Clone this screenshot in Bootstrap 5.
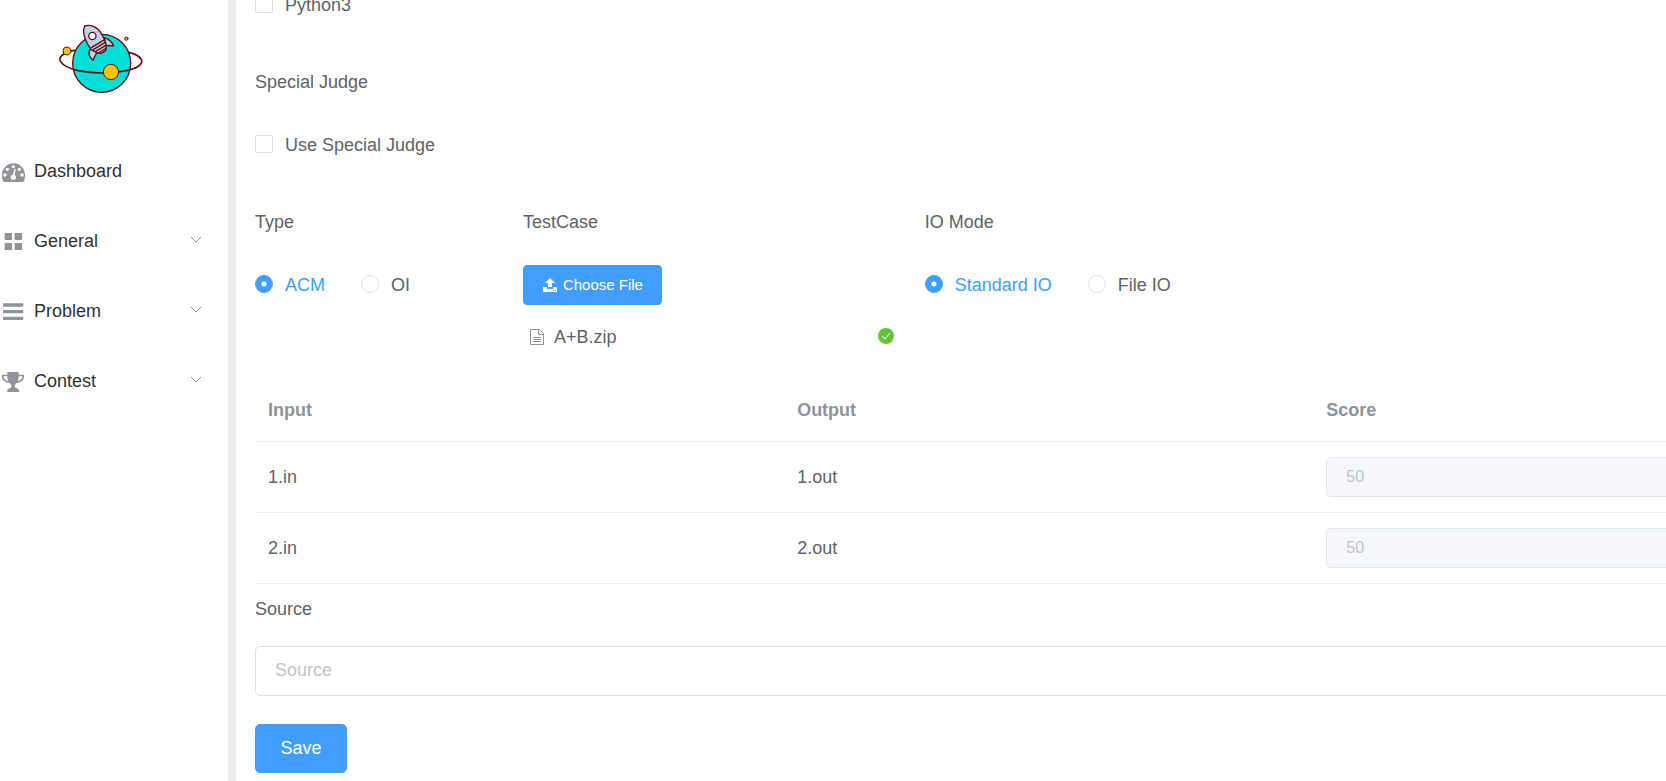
<!DOCTYPE html>
<html lang="en">
<head>
<meta charset="utf-8">
<meta name="viewport" content="width=device-width, initial-scale=1">
<title>Edit Problem</title>
<link href="https://cdn.jsdelivr.net/npm/bootstrap@5.3.0/dist/css/bootstrap.min.css" rel="stylesheet">
<style>
  :root { --accent: #409eff; --line: #ebeef5; --edge: #dcdfe6; --muted: #909399; --faint: #c0c4cc; }
  body { font-family: "Liberation Sans", Arial, sans-serif; font-size: 18px; line-height: 24px; color: #606266; overflow-x: hidden; }
  .side { width: 236px; border-right: 8px solid #ebebeb; }
  .brand { height: 136px; padding: 10px 0 0 40px; }
  .menu-row { height: 70px; color: #303133; padding: 0 26px 0 0; gap: 8px; font-size: 18px; }
  .menu-row svg { fill: var(--muted); flex: none; }
  .menu-row .chev { fill: none; stroke: var(--muted); margin-left: auto; }
  .pane { padding-left: 19px; overflow: hidden; }
  /* the form is wider than the window and runs past its right edge */
  .sheet { width: 112.5%; margin-top: -21px; }
  .field-title { display: block; line-height: 50px; margin: 0 0 12px; font-size: 18px; }
  .field-line { height: 50px; gap: 36px; }
  .block-gap { margin-bottom: 28px; }
  .pick { gap: 12px; }
  .pick label { padding-top: 2px; }
  .form-check-input.tick { width: 18px; height: 18px; margin: 0; border: 1px solid var(--edge); border-radius: 2px; flex: none; }
  .form-check-input.tick[type=radio] { border-radius: 50%; }
  .form-check-input.tick:checked { background: radial-gradient(circle, #fff 0 2px, var(--accent) 3px); border-color: var(--accent); }
  .form-check-input.tick:checked + label { color: var(--accent); }
  .row { --bs-gutter-x: 20px; }
  .btn-accent { --bs-btn-color: #fff; --bs-btn-bg: #409eff; --bs-btn-border-color: #409eff; --bs-btn-hover-color: #fff; --bs-btn-hover-bg: #66b1ff; --bs-btn-hover-border-color: #66b1ff; border-radius: 4px; }
  .upload-area { padding: 6px 0 26px; }
  .btn-upload { height: 40px; padding: 0 18px; font-size: 15px; gap: 5px; margin-bottom: 16px; }
  .btn-save { height: 49px; width: 92px; font-size: 18px; border-radius: 5px; }
  .file-row { height: 32px; padding: 0 11px 0 6px; }
  .file-row a { color: #606266; gap: 9px; }
  .cases { table-layout: fixed; margin: 0; --bs-table-bg: transparent; }
  .cases > :not(caption) > * > * { padding: 0 13px; border-bottom: 1px solid var(--line); vertical-align: middle; color: #606266; }
  .cases > thead > tr > th { height: 62px; color: var(--muted); }
  .cases > tbody > tr > td { height: 71px; }
  .score { height: 40px; font-size: 16px; padding: 0 19px; border-radius: 5px; }
  .score:disabled { background: #f5f7fa; border-color: #e4e7ed; color: var(--faint); }
  .source-box { height: 50px; font-size: 18px; padding: 0 19px; border: 1px solid var(--edge); border-radius: 5px; }
  .source-box::placeholder { color: var(--faint); }
</style>
</head>
<body>
<div class="d-flex min-vh-100">
  <aside class="side flex-shrink-0">
    <div class="brand">
      <svg width="120" height="100" viewBox="0 0 360 300" role="img" aria-label="Logo" fill="none" stroke="#5e0f12" stroke-width="4" stroke-linejoin="round" stroke-linecap="round">
        <circle cx="185" cy="160" r="87" fill="#00e0d8" stroke-width="4"/>
        <path d="M104 121C75 124 52 142 62 155C78 181 145 189 187 189C240 188 298 180 305 157C307 143 290 133 266 127" stroke-width="5"/>
        <circle cx="81" cy="123" r="12" fill="#ffc400" stroke-width="3"/>
        <circle cx="213" cy="186" r="23" fill="#ffc400" stroke-width="3"/>
        <circle cx="259" cy="86" r="5" fill="#ffa800" stroke-width="3"/>
        <g fill="#c3d0e4" stroke-width="4">
          <path d="M193 83C207 87 216 96 221 108L197 106Z"/>
          <path d="M150 118C144 129 147 141 159 150L171 126Z"/>
          <path d="M134 48C158 40 180 58 190 82L199 105L197 121L184 130L172 129L154 119C141 103 124 70 134 48Z"/>
          <circle cx="157" cy="78" r="11" fill="#fff"/>
          <path d="M155 112L190 91M160 119L194 98M166 125L197 106M174 130L199 114"/>
        </g>
      </svg>
    </div>
    <nav aria-label="Main">
      <a href="#" class="menu-row d-flex align-items-center text-decoration-none">
        <svg width="26" height="24" viewBox="0 57 78 72" aria-hidden="true">
          <path d="M11 126C7 120 6 112 6 105A34 35 0 0 1 75 105C75 112 74 120 70 126Z"/>
          <g fill="#fff"><circle cx="15" cy="105" r="5"/><circle cx="22" cy="88" r="5"/><circle cx="40" cy="80" r="5"/><circle cx="58" cy="88" r="5"/><circle cx="66" cy="105" r="5"/><circle cx="40" cy="112" r="8"/><path d="M38 109L43 87L47 88L43 110Z"/></g>
        </svg>
        <span>Dashboard</span>
      </a>
      <button type="button" class="menu-row btn border-0 rounded-0 w-100 d-flex align-items-center">
        <svg width="26" height="24" viewBox="0 267 78 72" aria-hidden="true"><path d="M14 279h22v21h-22zM44 279h22v21h-22zM14 309h22v21h-22zM44 309h22v21h-22z"/></svg>
        <span>General</span>
        <svg class="chev" width="12" height="10" viewBox="0 0 12 10" aria-hidden="true"><path d="M1 1L6 6L11 1"/></svg>
      </button>
      <button type="button" class="menu-row btn border-0 rounded-0 w-100 d-flex align-items-center">
        <svg width="26" height="24" viewBox="0 57 78 72" aria-hidden="true"><rect x="9" y="70" width="61" height="10" rx="2"/><rect x="9" y="90" width="61" height="10" rx="2"/><rect x="9" y="110" width="61" height="10" rx="2"/></svg>
        <span>Problem</span>
        <svg class="chev" width="12" height="10" viewBox="0 0 12 10" aria-hidden="true"><path d="M1 1L6 6L11 1"/></svg>
      </button>
      <button type="button" class="menu-row btn border-0 rounded-0 w-100 d-flex align-items-center">
        <svg width="26" height="24" viewBox="0 267 78 72" aria-hidden="true">
          <path d="M22 276H56V284H72V291C72 301 61 308 50 309C46 313 44 316 44 321C46 325 57 325 57 332V336H22V332C22 325 33 325 35 321C35 316 33 313 29 309C17 308 6 301 6 291V284H22Z"/>
          <path fill="#fff" d="M22 289H11V291C11 296 17 302 25 304C23 300 22 295 22 289ZM56 289H67V291C67 296 61 302 53 304C55 300 56 295 56 289Z"/>
        </svg>
        <span>Contest</span>
        <svg class="chev" width="12" height="10" viewBox="0 0 12 10" aria-hidden="true"><path d="M1 1L6 6L11 1"/></svg>
      </button>
    </nav>
  </aside>

  <main class="pane flex-grow-1">
    <form class="sheet">
      <div class="field-line d-flex align-items-center block-gap">
        <div class="pick d-flex align-items-center"><input class="form-check-input tick" type="checkbox" id="py3"><label for="py3">Python3</label></div>
      </div>

      <div class="block-gap">
        <div class="field-title">Special Judge</div>
        <div class="field-line d-flex align-items-center">
          <div class="pick d-flex align-items-center"><input class="form-check-input tick" type="checkbox" id="spj"><label for="spj">Use Special Judge</label></div>
        </div>
      </div>

      <div class="row">
        <fieldset class="col-2">
          <legend class="field-title">Type</legend>
          <div class="field-line d-flex align-items-center">
            <div class="pick d-flex align-items-center"><input class="form-check-input tick" type="radio" name="type" id="acm" checked><label for="acm">ACM</label></div>
            <div class="pick d-flex align-items-center"><input class="form-check-input tick" type="radio" name="type" id="oi"><label for="oi">OI</label></div>
          </div>
        </fieldset>
        <div class="col-3">
          <div class="field-title">TestCase</div>
          <div class="upload-area">
            <button type="button" class="btn btn-accent btn-upload d-flex align-items-center">
              <svg width="16" height="16" viewBox="0 0 16 16" fill="#fff" aria-hidden="true"><path d="M8 1L13 6H10V10H6V6H3ZM1 10H5V12H11V10H15V15H1Z"/><path d="M11 13h1v1h-1zM13 13h1v1h-1z" fill="#409eff"/></svg>
              <span>Choose File</span>
            </button>
            <div class="file-row d-flex align-items-center justify-content-between">
              <a href="#" class="d-flex align-items-center text-decoration-none">
                <svg width="16" height="18" viewBox="0 0 16 18" fill="none" stroke="#909399" aria-hidden="true"><path d="M1.500 1.500H10.500L14.500 5.500V16.500H1.500ZM9.500 1.500V6.500H14.500M4 9.500H12M4 11.500H12M4 13.500H12"/></svg>
                <span>A+B.zip</span>
              </a>
              <svg width="16" height="18" viewBox="0 0 16 18" role="img" aria-label="Uploaded"><circle cx="8" cy="8" r="8" fill="#67c23a"/><path d="M4 8L7 11L12 5" fill="none" stroke="#fff"/></svg>
            </div>
          </div>
        </div>
        <fieldset class="col-3">
          <legend class="field-title">IO Mode</legend>
          <div class="field-line d-flex align-items-center">
            <div class="pick d-flex align-items-center"><input class="form-check-input tick" type="radio" name="io" id="std" checked><label for="std">Standard IO</label></div>
            <div class="pick d-flex align-items-center"><input class="form-check-input tick" type="radio" name="io" id="fio"><label for="fio">File IO</label></div>
          </div>
        </fieldset>
      </div>

      <table class="table cases">
        <thead><tr><th scope="col">Input</th><th scope="col">Output</th><th scope="col">Score</th></tr></thead>
        <tbody>
          <tr><td>1.in</td><td>1.out</td><td><input class="form-control score" type="text" value="50" aria-label="Score for 1.in" disabled></td></tr>
          <tr><td>2.in</td><td>2.out</td><td><input class="form-control score" type="text" value="50" aria-label="Score for 2.in" disabled></td></tr>
        </tbody>
      </table>

      <div class="block-gap">
        <label class="field-title" for="source">Source</label>
        <input class="form-control source-box" type="text" id="source" placeholder="Source">
      </div>
      <button type="button" class="btn btn-accent btn-save">Save</button>
    </form>
  </main>
</div>
<script src="https://cdn.jsdelivr.net/npm/bootstrap@5.3.0/dist/js/bootstrap.bundle.min.js"></script>
</body>
</html>
